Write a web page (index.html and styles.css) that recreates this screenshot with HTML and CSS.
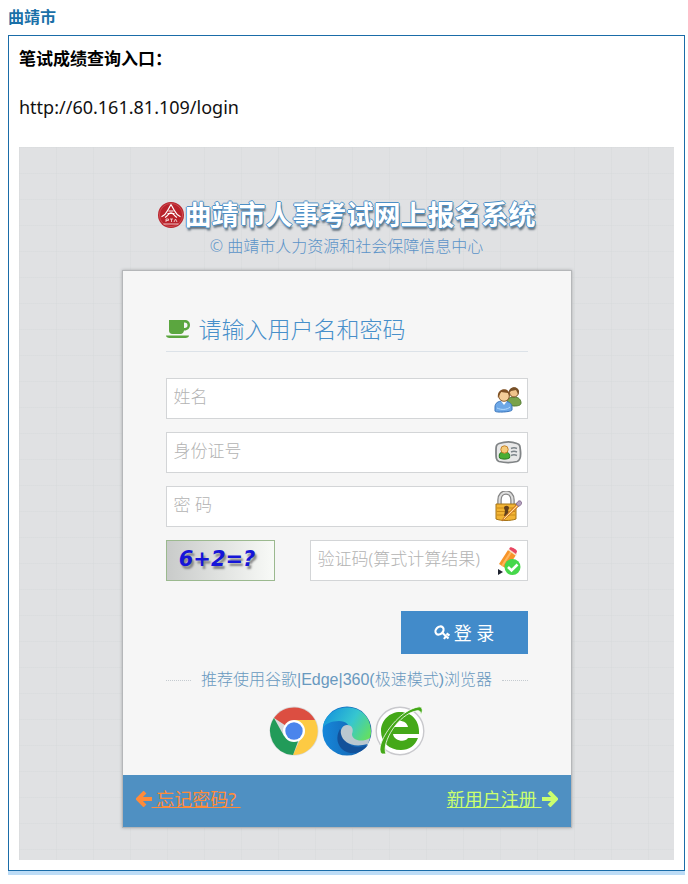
FILE: index.html
```html
<!DOCTYPE html>
<html lang="zh-CN">
<head>
<meta charset="utf-8">
<meta name="viewport" content="width=device-width, initial-scale=1">
<title>曲靖市 笔试成绩查询入口</title>
<link rel="stylesheet" href="styles.css">
</head>
<body>
<h1 class="city">曲靖市</h1>
<main class="box">
  <h2 class="entry">笔试成绩查询入口：</h2>
  <p class="address">http://60.161.81.109/login</p>
  <section class="portal">
    <header class="brand">
      <div class="brand-title">
        <svg class="brand-logo" viewBox="0 0 26 26" aria-hidden="true">
          <circle cx="13" cy="13" r="13" fill="#b9222b"/>
          <circle cx="13" cy="13" r="11.6" fill="none" stroke="#d86a6c" stroke-width=".6"/>
          <path d="M13 2.5 9.8 8.2c-1.300 2.700-3.200 5-6.300 6.500M13 2.500l3.200 5.700c1.300 2.700 3.200 5 6.300 6.500" fill="none" stroke="#fff" stroke-width="1.200"/>
          <path d="M7 15.500c3-1.600 3.500-4.600 6-4.600s3 3 6 4.600M10.500 9h5M9.500 11.500h7" fill="none" stroke="#fff" stroke-width="1.100"/>
          <path d="M8 20v-3h2.500v1.500H8M12 17h3M13.500 17v3M16 20l1.500-3 1.500 3M5.500 22h15" fill="none" stroke="#f4d3d3" stroke-width=".9"/>
        </svg>
        <strong>曲靖市人事考试网上报名系统</strong>
      </div>
      <p class="brand-owner">© 曲靖市人力资源和社会保障信息中心</p>
    </header>
    <form class="card">
      <div class="card-body">
        <h3 class="card-title">
          <svg class="cup" viewBox="0 0 24 20" aria-hidden="true">
            <path d="M3 1h15.500C22 1 24 3 24 6s-2.200 5.500-5.500 5.500H18c-.3 2.200-1.500 3.500-3.500 3.500h-8C4.300 15 3 13.700 3 11.500zM18 3.500V9h.5C20.500 9 21.500 8 21.500 6.200S20.500 3.500 18.500 3.500z" fill="#5ba63f" fill-rule="evenodd"/>
            <path d="M0 16.500h23c0 1.600-1.500 2.500-3.500 2.500h-16C1.500 19 0 18.100 0 16.500z" fill="#5ba63f"/>
          </svg>
          <span>请输入用户名和密码</span>
        </h3>
        <div class="fields">
          <div class="field">
            <input type="text" placeholder="姓名" aria-label="姓名">
            <svg class="field-icon" viewBox="0 0 28 28" aria-hidden="true">
              <path d="M13 20c-1-6 2-8 7-8 5 0 7 3 7 6 0 2-2 3-7 3z" fill="#79a24b" stroke="#527a30"/>
              <circle cx="20" cy="7.500" r="4.500" fill="#f1c48c" stroke="#795027"/>
              <path d="M15 8c-1-7 10-8 10-1l-1 2-2-4-5 1z" fill="#785028"/>
              <path d="M1 26v-4c0-4 3-6 8-6s9 2 9 6v3c0 2-17 3-17 1z" fill="#6da8e7" stroke="#3b75bb"/>
              <path d="m7 16 3 4 3-4" fill="#fff"/>
              <circle cx="10" cy="11" r="5.300" fill="#f5ce98" stroke="#875b2e"/>
              <path d="M4 13C2 2 17 1 16 12l-2-4-7-1z" fill="#805224"/>
              <path d="M3 23c4 2 10 2 13-1" fill="none" stroke="#b5dcff"/>
            </svg>
          </div>
          <div class="field">
            <input type="text" placeholder="身份证号" aria-label="身份证号">
            <svg class="field-icon" viewBox="0 0 28 28" aria-hidden="true">
              <path d="M5 4.500c6-2 13-2 18 0 3 1 3 2 3.500 8s-.5 9-3.500 10c-6 1.500-12 1.500-18 0-3-1-3-4-3-10 0-5 0-7 3-8z" fill="#e8e8e8" stroke="#808486" stroke-width="1.800"/>
              <path d="M5.500 19c-1-5 1-6 5-6s6 2 5 6c-3 1.500-7 1.500-10 0z" fill="#4aad34" stroke="#287a20"/>
              <circle cx="10.500" cy="10.500" r="3.700" fill="#f6cb79" stroke="#c4832b"/>
              <path d="M17 9.500c2-1 4-1 6 0m-6 3.500c2-1 4-1 6 0m-6 3.500c2-1 4-1 6 0" fill="none" stroke="#7d858a" stroke-width="1.400"/>
            </svg>
          </div>
          <div class="field">
            <input type="password" placeholder="密 码" aria-label="密 码">
            <svg class="field-icon tall" viewBox="0 0 28 32" aria-hidden="true">
              <path d="M5.500 14V9c0-10 13-10 13 0v5" fill="none" stroke="#858585" stroke-width="4.500"/>
              <path d="M5.500 14V9c0-10 13-10 13 0v5" fill="none" stroke="#dedede" stroke-width="2"/>
              <path d="M2 13h20v15c-5 2-15 2-20 0z" fill="#f2b434" stroke="#a67416"/>
              <path d="M3 17h18M3 20.500h18M3 24h18" stroke="#ca8a18"/>
              <path d="M10 17c0-3 5-3 5 0l-1 3 1 5h-5l1-5z" fill="#62401c"/>
              <path d="m8 30 1.500-3L24 12l2 2-15 14z" fill="#f4a23e" stroke="#b76829" stroke-width=".7"/>
              <path d="m10 28 14-14" stroke="#ffe2a0"/>
              <path d="m22 13 2-2.500c2-2 5 1 3 3l-2 2z" fill="#b2a0bd" stroke="#866d91"/>
            </svg>
          </div>
          <div class="verify">
            <div class="captcha"><span>6+2=?</span></div>
            <div class="field">
              <input type="text" placeholder="验证码(算式计算结果)" aria-label="验证码(算式计算结果)">
              <svg class="field-icon" viewBox="0 0 28 28" aria-hidden="true">
                <path d="m5 17 9-14 8 5-9 14z" fill="#f79429"/>
                <path d="m8 19 9-14" stroke="#ffb75e" stroke-width="2"/>
                <path d="m14 3 1-1 8 5-1 2z" fill="#f8e2c5"/>
                <path d="m15 2 1-1.500c1-1 7 2 7 4l-1 2.500z" fill="#e84762"/>
                <path d="m4 22 5 3-5 3z" fill="#1f2430"/>
                <circle cx="18.500" cy="20" r="8" fill="#46d84b"/>
                <path d="m14 20 3.500 3.500 6-6" fill="none" stroke="#fff" stroke-width="2.600"/>
              </svg>
            </div>
          </div>
        </div>
        <div class="actions">
          <button class="login" type="button">
            <svg class="key" viewBox="0 0 16 16" aria-hidden="true">
              <ellipse cx="5.500" cy="5.500" rx="4.500" ry="3.500" transform="rotate(-45 5.500 5.500)" fill="none" stroke="#fff" stroke-width="2.200"/>
              <path d="m8 7.500 6.500 6M10 14l2-3M12.500 8.500l3 2" fill="none" stroke="#fff" stroke-width="2.200"/>
            </svg>
            <span>登 录</span>
          </button>
        </div>
        <p class="advice"><span>推荐使用谷歌|Edge|360(极速模式)浏览器</span></p>
        <div class="browsers">
          <svg viewBox="0 0 50 50" role="img" aria-label="Chrome">
            <circle cx="25" cy="25" r="24.500" fill="#d8dadb"/>
            <path d="M25 25 5 12A24 24 0 0 1 46 14z" fill="#dc4e41"/>
            <path d="M25 14h21a24 24 0 0 1-22 35l9-20z" fill="#fdca43"/>
            <path d="m5 12 10 18 16 0-7 19A24 24 0 0 1 5 12z" fill="#229b59"/>
            <circle cx="25" cy="25" r="11" fill="#fff"/>
            <circle cx="25" cy="25" r="8.700" fill="#4b85ec"/>
          </svg>
          <svg viewBox="0 0 50 50" role="img" aria-label="Edge">
            <defs>
              <linearGradient id="edge-top" x1="0" x2="1" y1=".2" y2=".7"><stop stop-color="#1593dc"/><stop offset=".55" stop-color="#36c6d0"/><stop offset="1" stop-color="#64df62"/></linearGradient>
              <linearGradient id="edge-low" x1="0" x2="1"><stop stop-color="#1687da"/><stop offset="1" stop-color="#145aa6"/></linearGradient>
            </defs>
            <circle cx="25" cy="25" r="24.500" fill="url(#edge-low)"/>
            <path d="M1 21C4-3 46-8 49 24c1 11-8 17-17 13l-5-8c3-7-1-14-10-14-8 0-13 3-16 6z" fill="url(#edge-top)"/>
            <path d="M18 23c-7 12 1 25 14 24 6 0 11-4 14-8-11 5-20 1-23-7z" fill="#12519a"/>
            <path d="M19 28c-1-5 2-9 6-9 5 0 7 4 5 9 0 6 9 9 18 4l-2 6c-15 4-25-1-27-10z" fill="#bac8d0"/>
          </svg>
          <svg viewBox="0 0 50 50" role="img" aria-label="360">
            <circle cx="25" cy="25" r="23.800" fill="#fff" stroke="#c9c9cd" stroke-width="1.400"/>
            <path d="M44 28H18c1 7 12 9 15 4h10c-3 8-9 12-17 12C14 44 6 36 6 25S15 6 25 6c12 0 20 9 19 22z" fill="#44a818"/>
            <path d="M18 21c2-8 13-8 15 0z" fill="#fff"/>
            <path d="M7 48C-2 42 21 5 43 1c5-1 5 4 3 8 0-4-2-5-5-4C24 8 6 36 11 48z" fill="#44a818" stroke="#fff" stroke-width=".8"/>
          </svg>
        </div>
      </div>
      <nav class="card-footer">
        <a class="forgot" href="#forgot">
          <svg class="arrow" viewBox="0 0 16 16" aria-hidden="true"><path d="M9 1 2 8l7 7M2 8h14" fill="none" stroke="currentColor" stroke-width="4"/></svg><span>&nbsp;忘记密码?&nbsp;</span>
        </a>
        <a class="register" href="#register">
          <span>新用户注册&nbsp;</span><svg class="arrow" viewBox="0 0 16 16" aria-hidden="true"><path d="m7 1 7 7-7 7M14 8H0" fill="none" stroke="currentColor" stroke-width="4"/></svg>
        </a>
      </nav>
    </form>
  </section>
</main>
</body>
</html>
```
FILE: styles.css
```css
* {
  box-sizing: border-box;
}

body {
  margin: 0;
  padding: 5px 3px 8px 8px;
  background: #fff;
  color: #000;
  font-family: "Noto Sans", "Noto Sans CJK SC", sans-serif;
}

h1, h2, h3, p {
  margin: 0;
}

.city {
  margin-bottom: 6px;
  color: #1a70a8;
  font-size: 16px;
  line-height: 24px;
}

.box {
  padding: 10px;
  border: 1px solid #1a6ca8;
  box-shadow: 0 4px #bddcf6;
}

.entry {
  font-size: 17px;
  line-height: 25px;
}

.address {
  margin: 22px 0 26px;
  color: #111;
  font-size: 18px;
  line-height: 28px;
}

.portal {
  padding: 50px 16px 32px;
  background-color: #e0e1e3;
  background-image:
    linear-gradient(90deg, #d6d8da66 1px, transparent 1px),
    linear-gradient(#d6d8da66 1px, transparent 1px);
  background-size: 37px 37px, 37px 26px;
}

.brand {
  margin-bottom: 12px;
  text-align: center;
}

.brand-title {
  display: flex;
  align-items: center;
  justify-content: center;
  gap: 1px;
  color: #fff;
  font-size: 27px;
  line-height: 36px;
  white-space: nowrap;
  text-shadow: 1px 0 #4c8fc6, -1px 0 #4c8fc6, 0 -1px #4c8fc6, 0 1px #4c8fc6, 1px 3px 2px #65737f;
}

.brand-logo {
  flex: none;
  width: 26px;
  height: 26px;
}

.brand-owner {
  margin-top: 1px;
  color: #5b93c8;
  font-size: 16px;
  line-height: 24px;
  font-weight: 300;
}

.card {
  max-width: 450px;
  margin: 0 auto;
  border: 1px solid #b5b7b9;
  background: #f6f6f6;
  box-shadow: 0 0 3px #a8abae;
}

.card-body {
  padding: 41px 43px 19px;
}

.card-title {
  display: flex;
  align-items: center;
  gap: 9px;
  margin-bottom: 26px;
  padding-bottom: 5px;
  border-bottom: 1px solid #dce2e8;
  color: #478fca;
  font-size: 23px;
  font-weight: 300;
  line-height: 34px;
}

.cup {
  width: 24px;
  height: 20px;
}

.fields {
  display: grid;
  grid-template-columns: minmax(0, 1fr);
  gap: 13px;
}

.field {
  display: flex;
  align-items: center;
  flex: 1;
  min-width: 0;
  height: 41px;
  padding: 0 5px 0 7px;
  border: 1px solid #d3d5d7;
  background: #fff;
}

.field input {
  flex: 1;
  width: 0;
  min-width: 0;
  padding: 0 0 4px;
  border: 0;
  outline: 0;
  background: transparent;
  color: #555;
  font: 300 17px/28px "Noto Sans", "Noto Sans CJK SC", sans-serif;
}

.field input::placeholder {
  color: #b3b3b3;
  opacity: 1;
}

.field-icon {
  flex: none;
  width: 28px;
  height: 28px;
}

.field-icon.tall {
  height: 32px;
}

.verify {
  display: flex;
  gap: 35px;
}

.captcha {
  display: grid;
  place-items: center;
  width: 109px;
  height: 41px;
  padding: 0 6px 4px 0;
  border: 1px solid #9bb98f;
  background: linear-gradient(90deg, #c9cbca, #f8faf7);
  color: #1515d8;
  font: italic bold 21px "DejaVu Sans", sans-serif;
  text-shadow: 2px 3px 2px #888;
}

.actions {
  display: flex;
  justify-content: flex-end;
  margin-top: 30px;
}

.login {
  display: flex;
  align-items: center;
  justify-content: center;
  gap: 4px;
  width: 127px;
  height: 43px;
  padding: 0;
  border: 0;
  background: #428bca;
  color: #fff;
  font: 18px/28px "Noto Sans", "Noto Sans CJK SC", sans-serif;
}

.key {
  width: 16px;
  height: 16px;
}

.advice {
  display: flex;
  align-items: center;
  gap: 10px;
  margin: 14px 0;
  color: #6899bf;
  font-family: "Liberation Sans", "Noto Sans CJK SC", sans-serif;
  font-size: 16px;
  line-height: 24px;
  font-weight: 300;
  white-space: nowrap;
}

.advice::before,
.advice::after {
  flex: 1;
  border-top: 1px dotted #c5cbd0;
  content: "";
}

.browsers {
  display: flex;
  justify-content: center;
  gap: 3px;
}

.browsers svg {
  width: 50px;
  height: 50px;
}

.card-footer {
  display: flex;
  align-items: center;
  justify-content: space-between;
  height: 52px;
  padding: 0 13px 4px;
  background: #4f90c2;
  font-size: 18px;
  line-height: 26px;
}

.card-footer a {
  display: flex;
  align-items: center;
  text-decoration: none;
}

.card-footer span {
  text-decoration: underline;
}

.forgot {
  color: #ff8b39;
}

.register {
  color: #cbff6e;
}

.arrow {
  width: 16px;
  height: 16px;
}
```
